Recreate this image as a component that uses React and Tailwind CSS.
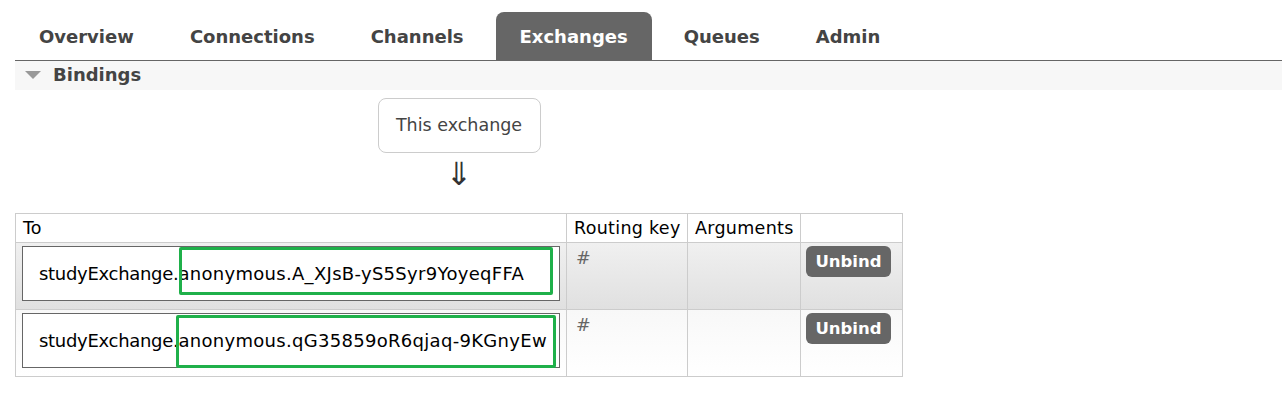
import React from "react";

const TABS = ["Overview", "Connections", "Channels", "Exchanges", "Queues", "Admin"];

const bindings = [
  {
    source: "studyExchange.",
    queue: "anonymous.A_XJsB-yS5Syr9YoyeqFFA",
    rowClass: "bg-gradient-to-b from-[#f0f0f0] to-[#e0e0e0]",
    mark: "left-[156px] top-0 w-[374px] h-[48px]",
  },
  {
    source: "studyExchange.",
    queue: "anonymous.qG35859oR6qjaq-9KGnyEw",
    rowClass: "bg-gradient-to-b from-[#f8f8f8] to-[#ffffff]",
    mark: "left-[153px] top-[1px] w-[380px] h-[53px]",
  },
];

export default function App() {
  return (
    <div className="min-h-[397px] bg-white pl-[15px] pt-[12px] font-['DejaVu_Sans',Verdana,sans-serif] text-[#444]">
      {/* Tabs */}
      <div className="flex border-b border-[#666]">
        {TABS.map((t) => (
          <div
            key={t}
            className={`mr-[8px] flex h-[48px] items-center rounded-t-[8px] px-[24px] pt-[1px] text-[18px] font-bold ${
              t === "Exchanges" ? "bg-[#666] text-white" : "text-[#444]"
            }`}
          >
            {t}
          </div>
        ))}
      </div>

      {/* Section header */}
      <div className="flex h-[29px] items-center bg-[#f7f7f7] pb-[3px] pl-[10px]">
        <svg width="16" height="10" viewBox="0 0 16 10" className="mr-[12px] mt-[2px]">
          <polygon points="0,1 16,1 8,9" fill="#999" />
        </svg>
        <span className="text-[18px] font-bold text-[#444]">Bindings</span>
      </div>

      <div className="w-[888px]">
        <div className="flex flex-col items-center pt-[8px]">
          <div className="flex h-[55px] w-[163px] items-center justify-center rounded-[8px] border border-[#ccc] text-[17.5px] text-[#444]">
            This exchange
          </div>
          <div className="mt-[4px] h-[34px] text-[32px] leading-[34px] text-[#333]">⇓</div>
        </div>

        <table className="mt-[22px] w-[888px] table-fixed border-collapse whitespace-nowrap text-[17.5px] text-black">
          <colgroup>
            <col className="w-[551px]" />
            <col className="w-[121px]" />
            <col className="w-[113px]" />
            <col />
          </colgroup>
          <thead>
            <tr className="h-[29px]">
              <th className="border border-[#ccc] px-[7px] text-left font-normal">To</th>
              <th className="border border-[#ccc] px-[7px] text-left font-normal tracking-[0.3px]">Routing key</th>
              <th className="border border-[#ccc] px-[7px] text-left font-normal tracking-[0.3px]">Arguments</th>
              <th className="border border-[#ccc]"></th>
            </tr>
          </thead>
          <tbody>
            {bindings.map((b, i) => (
              <tr key={i} className={`h-[67px] ${b.rowClass}`}>
                <td className="border border-[#ccc] px-[6px] align-top pt-[3px]">
                  <div className="relative flex h-[55px] items-center border border-[#666] bg-white pl-[16px] text-[18px]">
                    <span className="tracking-[-0.3px]">{b.source}</span>
                    <span className="tracking-[0.3px]">{b.queue}</span>
                    <div className={`absolute rounded-[2px] border-[3px] border-[#1fb04a] ${b.mark}`} />
                  </div>
                </td>
                <td className="border border-[#ccc] px-[9px] pt-[2px] align-top text-[#666]">#</td>
                <td className="border border-[#ccc]"></td>
                <td className="border border-[#ccc] px-[5px] pt-[3px] align-top">
                  <button className="h-[31px] w-[85px] rounded-[6px] bg-[#666] pt-[1px] text-[16.5px] font-bold text-white">
                    Unbind
                  </button>
                </td>
              </tr>
            ))}
          </tbody>
        </table>
      </div>
    </div>
  );
}
